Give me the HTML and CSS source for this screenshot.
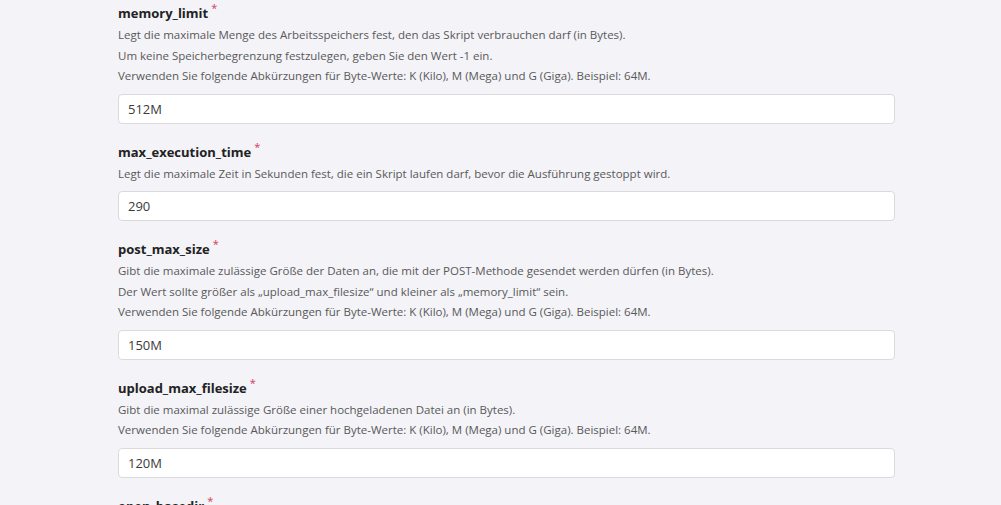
FILE: index.html
```html
<!DOCTYPE html>
<html lang="de">
<head>
  <meta charset="UTF-8" />
  <meta name="viewport" content="width=device-width, initial-scale=1.0"/>
  <title>PHP-Einstellungen</title>
  <link rel="stylesheet" href="styles.css">
</head>
<body>
  <form class="settings">
    <div class="field">
      <label class="field-label" for="memory_limit">memory_limit<span class="req">*</span></label>
      <p class="hint">Legt die maximale Menge des Arbeitsspeichers fest, den das Skript verbrauchen darf (in Bytes).</p>
      <p class="hint">Um keine Speicherbegrenzung festzulegen, geben Sie den Wert -1 ein.</p>
      <p class="hint">Verwenden Sie folgende Abkürzungen für Byte-Werte: K (Kilo), M (Mega) und G (Giga). Beispiel: 64M.</p>
      <input class="text-input" id="memory_limit" type="text" value="512M">
    </div>

    <div class="field">
      <label class="field-label" for="max_execution_time">max_execution_time<span class="req">*</span></label>
      <p class="hint">Legt die maximale Zeit in Sekunden fest, die ein Skript laufen darf, bevor die Ausführung gestoppt wird.</p>
      <input class="text-input" id="max_execution_time" type="text" value="290">
    </div>

    <div class="field">
      <label class="field-label" for="post_max_size">post_max_size<span class="req">*</span></label>
      <p class="hint">Gibt die maximale zulässige Größe der Daten an, die mit der POST-Methode gesendet werden dürfen (in Bytes).</p>
      <p class="hint">Der Wert sollte größer als „upload_max_filesize“ und kleiner als „memory_limit“ sein.</p>
      <p class="hint">Verwenden Sie folgende Abkürzungen für Byte-Werte: K (Kilo), M (Mega) und G (Giga). Beispiel: 64M.</p>
      <input class="text-input" id="post_max_size" type="text" value="150M">
    </div>

    <div class="field">
      <label class="field-label" for="upload_max_filesize">upload_max_filesize<span class="req">*</span></label>
      <p class="hint">Gibt die maximal zulässige Größe einer hochgeladenen Datei an (in Bytes).</p>
      <p class="hint">Verwenden Sie folgende Abkürzungen für Byte-Werte: K (Kilo), M (Mega) und G (Giga). Beispiel: 64M.</p>
      <input class="text-input" id="upload_max_filesize" type="text" value="120M">
    </div>

    <div class="field">
      <label class="field-label" for="open_basedir">open_basedir<span class="req">*</span></label>
      <p class="hint">Legt die Verzeichnisse fest, auf die PHP zugreifen darf.</p>
    </div>
  </form>
</body>
</html>
```

FILE: styles.css
```css
body {
  margin: 0;
  background: #f3f3f8;
  font-family: "Open Sans", "Noto Sans", Arial, sans-serif;
  color: #222;
}
.settings {
  width: 777px;
  margin-left: 118px;
  padding-top: 3px;
}
.field {
  margin-bottom: 18px;
}
.field-label {
  display: block;
  font-size: 13px;
  font-weight: 700;
  line-height: 20px;
  color: #222;
}
.req {
  color: #d23a5e;
  font-size: 11px;
  font-weight: 400;
  line-height: 0;
  vertical-align: 6px;
  margin-left: 3px;
}
.hint {
  margin: 0;
  font-size: 11.5px;
  line-height: 20.5px;
  color: #595959;
}
.field-label + .hint {
  margin-top: 2px;
}
.text-input {
  display: block;
  box-sizing: border-box;
  width: 100%;
  height: 30px;
  margin-top: 7px;
  padding: 0 9px;
  border: 1px solid #d9d9de;
  border-radius: 4px;
  background: #fff;
  font-family: inherit;
  font-size: 13px;
  color: #3a3a3a;
}
```
